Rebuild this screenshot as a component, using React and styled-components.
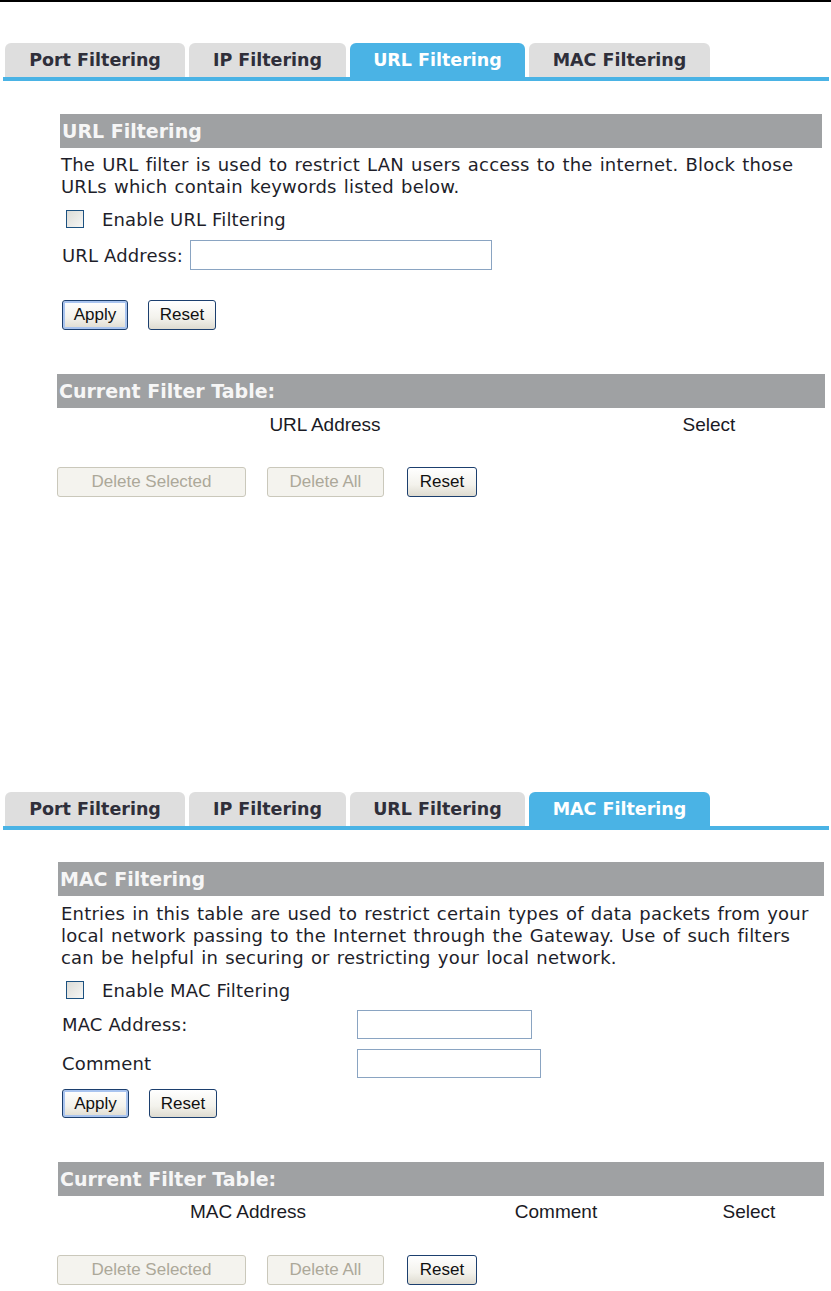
import React from 'react';
import styled, { createGlobalStyle } from 'styled-components';

const GlobalStyle = createGlobalStyle`
    body {
        margin: 0;
        background: #ffffff;
        font-family: "DejaVu Sans", Verdana, sans-serif;
        color: #1e1e2a;
    }
`;

const Page = styled.div`
    width: 831px;
    border-top: 2px solid #000000;
`;

const Panel = styled.div`
    margin-top: ${props => props.$top}px;
`;

const TabBar = styled.div`
    display: flex;
    gap: 4px;
    margin: 0 2px 0 3px;
    padding-left: 2px;
    border-bottom: 4px solid #4ab3e5;
`;

const Tab = styled.div`
    width: ${props => props.$w}px;
    height: 34px;
    display: flex;
    align-items: center;
    justify-content: center;
    border-radius: 6px 6px 0 0;
    background: ${props => (props.$active ? '#4ab3e5' : '#dedede')};
    color: ${props => (props.$active ? '#ffffff' : '#2f2f3a')};
    font-weight: bold;
    font-size: 17.5px;
    white-space: nowrap;
`;

const Section = styled.div`
    padding: 0 6px 0 57px;
`;

const TitleBar = styled.div`
    margin: ${props => props.$mt}px ${props => props.$inset || 0}px 0 ${props => props.$inset || 0}px;
    height: 34px;
    display: flex;
    align-items: center;
    padding-left: 2px;
    background: #9fa1a3;
    color: #f6f6f6;
    font-weight: bold;
    font-size: 19px;
    white-space: nowrap;
`;

const Paragraph = styled.p`
    margin: ${props => props.$mt}px 0 0 4px;
    font-size: 18px;
    letter-spacing: 0.2px;
    word-spacing: 1.2px;
    line-height: 22px;
    white-space: nowrap;
`;

const CheckRow = styled.label`
    margin: ${props => props.$mt}px 0 0 9px;
    height: 22px;
    display: flex;
    align-items: center;
    gap: 18px;
    font-size: 18px;
    letter-spacing: 0.15px;
`;

const Box = styled.span`
    width: 16px;
    height: 16px;
    border: 1px solid #1c5180;
    background: linear-gradient(135deg, #dcdcd7 0%, #f6f6f4 100%);
    flex: none;
`;

const FieldRow = styled.div`
    margin-top: ${props => props.$mt}px;
    margin-left: 5px;
    display: ${props => (props.$grid ? 'grid' : 'flex')};
    grid-template-columns: 288px auto;
    align-items: center;
    gap: 7px;
    font-size: 18px;
    letter-spacing: 0.15px;
`;

const TextInput = styled.div`
    width: ${props => props.$w}px;
    height: ${props => props.$h}px;
    box-sizing: border-box;
    border: 1px solid #8aa4c2;
    background: #ffffff;
`;

const ButtonRow = styled.div`
    margin: ${props => props.$mt}px 0 0 ${props => props.$ml || 0}px;
    display: flex;
    gap: ${props => props.$gap}px;
`;

const Button = styled.button`
    width: ${props => props.$w}px;
    height: ${props => props.$h || 30}px;
    box-sizing: border-box;
    margin-right: ${props => props.$mr || 0}px;
    padding: 0;
    border-radius: 3px;
    font-family: "Liberation Sans", Arial, sans-serif;
    font-size: 17px;
    border: 1px solid ${props => (props.disabled ? '#cac8bb' : '#1c3f6e')};
    color: ${props => (props.disabled ? '#aca899' : '#111111')};
    background: ${props =>
        props.disabled ? '#f4f3ee' : 'linear-gradient(180deg, #ffffff 0%, #f3f2ec 60%, #dedbd0 100%)'};
    box-shadow: ${props => (props.$primary ? 'inset 0 0 0 2px #a9c4ef' : 'none')};
`;

const ColumnRow = styled.div`
    margin-top: ${props => props.$mt}px;
    height: 26px;
    display: grid;
    grid-template-columns: ${props => props.$cols};
    align-items: center;
    font-family: "Liberation Sans", Arial, sans-serif;
    font-size: 19px;
    color: #1a1a24;
`;

const Column = styled.div`
    text-align: center;
`;

const tabs = [
    { label: 'Port Filtering', w: 180 },
    { label: 'IP Filtering', w: 157 },
    { label: 'URL Filtering', w: 175 },
    { label: 'MAC Filtering', w: 181 },
];

const Tabs = ({ active }) => (
    <TabBar>
        {tabs.map(t => (
            <Tab key={t.label} $w={t.w} $active={t.label === active}>
                {t.label}
            </Tab>
        ))}
    </TabBar>
);

const DeleteButtons = ({ mt }) => (
    <ButtonRow $mt={mt} $gap={21}>
        <Button $w={189} disabled>Delete Selected</Button>
        <Button $w={117} $mr={2} disabled>Delete All</Button>
        <Button $w={70}>Reset</Button>
    </ButtonRow>
);

const App = () => {
    return (
        <Page>
            <GlobalStyle />
            <Panel $top={41}>
                <Tabs active="URL Filtering" />
                <Section>
                    <TitleBar $mt={33} $inset={3}>URL Filtering</TitleBar>
                    <Paragraph $mt={6}>
                        The URL filter is used to restrict LAN users access to the internet. Block those
                        <br />
                        URLs which contain keywords listed below.
                    </Paragraph>
                    <CheckRow $mt={10}>
                        <Box />
                        Enable URL Filtering
                    </CheckRow>
                    <FieldRow $mt={10}>
                        URL Address:
                        <TextInput $w={302} $h={30} />
                    </FieldRow>
                    <ButtonRow $mt={30} $ml={5} $gap={20}>
                        <Button $w={66} $primary>Apply</Button>
                        <Button $w={68}>Reset</Button>
                    </ButtonRow>
                    <TitleBar $mt={44}>Current Filter Table:</TitleBar>
                    <ColumnRow $mt={4} $cols="536px 232px">
                        <Column>URL Address</Column>
                        <Column>Select</Column>
                    </ColumnRow>
                    <DeleteButtons mt={29} />
                </Section>
            </Panel>

            <Panel $top={295}>
                <Tabs active="MAC Filtering" />
                <Section>
                    <TitleBar $mt={32} $inset={1}>MAC Filtering</TitleBar>
                    <Paragraph $mt={7}>
                        Entries in this table are used to restrict certain types of data packets from your
                        <br />
                        local network passing to the Internet through the Gateway. Use of such filters
                        <br />
                        can be helpful in securing or restricting your local network.
                    </Paragraph>
                    <CheckRow $mt={10}>
                        <Box />
                        Enable MAC Filtering
                    </CheckRow>
                    <FieldRow $mt={9} $grid>
                        MAC Address:
                        <TextInput $w={175} $h={29} />
                    </FieldRow>
                    <FieldRow $mt={10} $grid>
                        Comment
                        <TextInput $w={184} $h={29} />
                    </FieldRow>
                    <ButtonRow $mt={11} $ml={5} $gap={20}>
                        <Button $w={67} $h={29} $primary>Apply</Button>
                        <Button $w={68} $h={29}>Reset</Button>
                    </ButtonRow>
                    <TitleBar $mt={44} $inset={1}>Current Filter Table:</TitleBar>
                    <ColumnRow $mt={3} $cols="382px 234px 152px">
                        <Column>MAC Address</Column>
                        <Column>Comment</Column>
                        <Column>Select</Column>
                    </ColumnRow>
                    <DeleteButtons mt={30} />
                </Section>
            </Panel>
        </Page>
    );
};

export default App;
